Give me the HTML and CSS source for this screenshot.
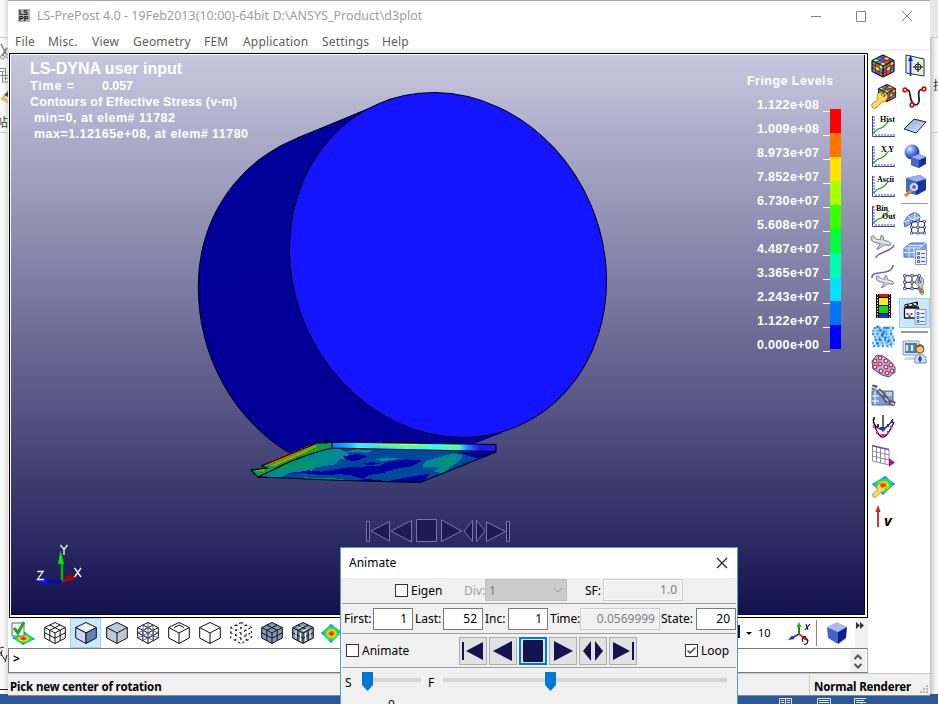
FILE: index.html
```html
<!DOCTYPE html>
<html lang="en">
<head>
<meta charset="utf-8">
<title>LS-PrePost 4.0</title>
<link rel="stylesheet" href="styles.css">
</head>
<body>
<svg class="defs" width="0" height="0">
  <defs>
    <linearGradient id="sky" x1="0" y1="0" x2="0" y2="1"><stop offset="0" stop-color="#c7c7de"/><stop offset="1" stop-color="#131250"/></linearGradient>
    <linearGradient id="side" x1="0" y1="0" x2=".35" y2="1"><stop offset="0" stop-color="#0000b4"/><stop offset=".25" stop-color="#00009b"/><stop offset="1" stop-color="#000096"/></linearGradient>
    <linearGradient id="band" x1="0" y1="0" x2="1" y2="0"><stop offset="0" stop-color="#0878f0"/><stop offset=".1" stop-color="#20b0ff"/><stop offset=".16" stop-color="#30f0ff"/><stop offset=".3" stop-color="#50d0ff"/><stop offset=".45" stop-color="#40ffd8"/><stop offset=".6" stop-color="#38f8f8"/><stop offset=".78" stop-color="#30ffc8"/><stop offset=".82" stop-color="#3090ff"/><stop offset=".9" stop-color="#1a1aff"/></linearGradient>
    <linearGradient id="pale" x1="0" y1="0" x2="1" y2="1"><stop offset="0" stop-color="#7e9be6"/><stop offset="1" stop-color="#e8f0ff"/></linearGradient>
    <radialGradient id="ball" cx=".35" cy=".3" r=".7"><stop offset="0" stop-color="#dfe8ff"/><stop offset=".5" stop-color="#5b80e0"/><stop offset="1" stop-color="#122a98"/></radialGradient>
    <radialGradient id="heat"><stop offset="0" stop-color="#e01000"/><stop offset=".2" stop-color="#ff5000"/><stop offset=".35" stop-color="#ffe000"/><stop offset=".55" stop-color="#38e030"/><stop offset=".75" stop-color="#00c8e0"/><stop offset="1" stop-color="#1040f0"/></radialGradient>
    <g id="faces3">
      <path d="M0-10.500 10.300-5.500 10.300 5 0 10.500-10.300 5-10.300-5.500z"/>
      <path d="M-10.300-5.500 0 0 10.300-5.500M0 0V10.500" fill="none"/>
    </g>
    <path id="grid2" fill="none" d="M-5.200-8 5.200-2.700V7.700M5.200-8-5.200-2.700V7.700M-10.300-.2 0 5.200 10.300-.2"/>
    <g id="rubik" stroke="#101018" stroke-width=".45">
      <path fill="#b428c4" d="M0-11 3.700-9.300 0-7.500-3.700-9.300zM7.400-7.500 11-5.500 7.400-3.700 3.700-5.600z"/>
      <path fill="#20a8f0" d="M-3.700-9.300 0-7.500-3.700-5.600-7.400-7.500z"/><path fill="#f8f020" d="M3.700-9.300 7.400-7.500 3.700-5.600 0-7.500z"/>
      <path fill="#f8f020" d="M-7.400-7.500-3.700-5.600-7.400-3.700-11-5.500z"/><path fill="#b428c4" d="M0-7.500 3.700-5.600 0-3.700-3.700-5.600z"/>
      <path fill="#20a8f0" d="M-3.700-5.600 0-3.700-3.700-1.800-7.400-3.700z"/><path fill="#f05018" d="M3.700-5.600 7.400-3.700 3.700-1.800 0-3.700z"/><path fill="#f8f020" d="M0-3.700 3.700-1.800 0 0-3.700-1.800z"/>
      <path fill="#20a8f0" d="M-11-5.500-7.400-3.700V0L-11-1.800zM-3.700 2V5.700L0 7.500V3.800zM3.700-1.800V1.900L0 3.800V0zM11 2V5.500L7.400 7.400V3.700z"/>
      <path fill="#f05018" d="M-7.400-3.700-3.700-1.800V2L-7.400 0zM-11-1.800-7.400 0V3.700L-11 2zM7.400-3.700V0L3.700 1.900V-1.800zM3.700 5.600V9.300L0 11V7.500z"/>
      <path fill="#f8f020" d="M-3.700-1.800 0 0V3.800L-3.700 2zM-7.400 0-3.700 2V5.700L-7.400 3.700zM11-5.500V-1.800L7.400 0V-3.700zM7.400 0V3.700L3.700 5.600V1.900z"/>
      <path fill="#b428c4" d="M-7.400 3.700-3.700 5.700V9.300L-7.400 7.400zM11-1.800V2L7.400 3.700V0zM3.700 1.900V5.600L0 7.500V3.800z"/>
      <path fill="#20a8f0" d="M-11 2-7.400 3.700V7.400L-11 5.500z"/><path fill="#f05018" d="M-3.700 5.700 0 7.500V11L-3.700 9.300zM7.400 3.700V7.400L3.700 9.300V5.600z"/>
      <path fill="none" stroke-width="1" d="M0-11 11-5.500V5.500L0 11-11 5.500V-5.500zM-11-5.500 0 0 11-5.500M0 0V11"/>
    </g>
    <g id="wrench"><path d="M-11 8-5 3C-7 0-5-4-1-4L-2-1 1 1 4-2C6 2 3 6-1 6L-7 12C-10 13-12 11-11 8z" fill="#ffd860" stroke="#a87010" stroke-width=".8"/></g>
    <g id="plot"><path d="M-10.500-10V10.500H12" fill="none" stroke="#3a46a8" stroke-width="1"/><path d="M-10-9h2m-2 3h2m-2 3h2m-2 3h2m-2 3h2m-2 3h2M-7 8v2m3-2v2m3-2v2m3-2v2m3-2v2m3-2v2m3-2v2" fill="none" stroke="#3a46a8"/><path d="M-9.500 8C-6 1-4 4 0 1S3-3 6-5" fill="none" stroke="#30a030" stroke-width="1.300"/></g>
    <g id="nodes"><path d="M-9-9H9M-9-1H9M-9 7H9M-9-9V7M0-9V7M9-9V7" fill="none" stroke="#222" stroke-width="1.300"/><path fill="#fff" stroke="#2c3c98" d="M-10.500-10.500h3v3h-3zM-1.500-10.500h3v3h-3zM7.500-10.500h3v3h-3zM-10.500-2.500h3v3h-3zM-1.500-2.500h3v3h-3zM7.500-2.500h3v3h-3zM-10.500 5.500h3v3h-3zM-1.500 5.500h3v3h-3zM7.500 5.500h3v3h-3z"/></g>
    <g id="list"><path fill="#edf2ff" stroke="#7f96d8" d="M.5-3.500H11.500V11.500H.5z"/><path fill="none" stroke="#3c5cc8" d="M2.500-.5h2v2h-2zM2.500 3.500h2v2h-2zM2.500 7.500h2v2h-2zM6 .5h4M6 4.500h4M6 8.500h4"/></g>
    <g id="plane"><path fill="#c4ccd4" stroke="#5f6c78" stroke-width=".9" d="M-12-8-9-10-6-6-1-5 0-10 2-10 4-4 9-3 12 0 10 2 4 1-3 6-5 6-1 0-8-2-11-4z"/><path d="M-9-5 9-1" stroke="#fff" stroke-width="1.200"/></g>
  </defs>
</svg>

<div class="desktop">
  <div class="behind left">
    <svg width="8" height="704" viewBox="0 0 8 704">
      <path d="M0 37.500H8M0 132.500H8" stroke="#c8c8c8"/>
      <path d="M1 44 6 54M7 48 2 56" stroke="#777" stroke-width="1.500"/><circle cx="2.500" cy="57" r="2" fill="none" stroke="#888"/><circle cx="8" cy="56" r="2" fill="none" stroke="#888"/>
      <path d="M0 68.500H5.500V80M0 71.500H4M0 75.500H4M2.500 71V82H8M4 75.500H8M4 78.500H8" fill="none" stroke="#888"/>
      <path d="M0 99 4 95 8 100V104z" fill="#e6bd78"/><path d="M4 95 8 91V97z" fill="#505050"/>
      <text x="-4" y="127" class="cjk">帖</text>
      <path d="M0 648 4 647M0 652 5 660M2 650 1 656M7 655 5 662" stroke="#222" fill="none"/>
      <path d="M0 689.500H8" stroke="#222"/><path d="M0 694H8V704H0z" fill="#2b579a"/>
    </svg>
  </div>

  <main class="window">
    <header class="titlebar">
      <svg class="logo" width="12" height="13" viewBox="0 0 12 13"><rect width="12" height="13" fill="#b0b0b0"/><text x="1" y="6.300" class="logotext">LS</text><text x="1" y="12.400" class="logotext">PP</text></svg>
      <span class="title">LS-PrePost 4.0 - 19Feb2013(10:00)-64bit D:\ANSYS_Product\d3plot</span>
      <svg class="caption" width="104" height="14" viewBox="0 0 104 14" fill="none" stroke="#858585"><path d="M1 7.500H11M46.500 2.500H55.500V12.500H46.500zM92 2 102 12M102 2 92 12"/></svg>
    </header>
    <nav class="menu"><span class="m1">File</span><span class="m2">Misc.</span><span class="m3">View</span><span class="m4">Geometry</span><span class="m5">FEM</span><span class="m6">Application</span><span class="m7">Settings</span><span>Help</span></nav>

    <div class="work">
      <div class="center">
        <div class="frame">
          <svg class="scene" width="853" height="559" viewBox="11 55 853 559">
            <rect x="11" y="55" width="853" height="559" fill="url(#sky)"/>
            <path d="M297 138C240 160 198 215 198.300 288C198.300 355 233 420 291 454L330 470 400 475 476 443 502 433 440 200 378 104z" fill="url(#side)"/>
            <path d="M305 135C240 160 198 215 198.300 288C198.300 355 233 420 291 454M297 138 376 106" fill="none" stroke="#000008" stroke-width="1"/>
            <ellipse cx="448" cy="265" rx="175.600" ry="155" transform="rotate(66.400 448 265)" fill="#1414ff" stroke="#000010"/>
            <g transform="translate(240 420) scale(.33333)" shape-rendering="crispEdges">
              <path fill="#00489c" d="M52 170 100 142 200 106 275 84 767 93 740 108 545 187 310 181z"/>
              <path fill="#008a96" d="M55 168 100 143 180 114 270 85 295 85 322 98 328 113 300 118 285 133 230 142 215 152 150 158 120 172zM545 140 560 122 640 100 670 106 655 125 610 158 580 157 600 140zM405 118 440 112 478 116 430 124zM350 88 400 92 380 98 320 95z"/>
              <path fill="#009766" d="M100 151 160 128 240 122 240 134 180 146 130 152zM190 172 300 176 315 181 200 177zM580 133 620 119 650 124 630 135z"/>
              <path fill="#0000a0" d="M140 161 205 151 245 155 330 141 420 138 440 125 500 118 548 122 515 139 460 148 430 159 385 165 370 178 330 165 300 163 240 165 195 160zM308 109 350 102 385 108 345 124 320 120zM310 180 390 178 450 184 545 187 440 185zM440 184 500 172 575 160 545 187zM650 96 762 97 738 112 705 113zM365 131 400 126 420 131 390 136z"/>
              <path fill="#089858" d="M65 136 230 68 275 70 274 84 180 112 100 150 55 170 36 150 80 150z"/>
              <path fill="#b07008" d="M70 135 100 120 210 75 225 77 130 120 90 135z"/>
              <path fill="#78b010" d="M90 137 180 98 225 76 235 78 190 101 110 137zM38 150 75 147 68 155z"/>
              <path fill="#18a020" d="M110 135 250 75 256 82 130 138z"/>
              <path fill="url(#band)" d="M275 65 767 73V95L275 84z"/>
              <path fill="#70ff60" d="M390 73 470 69 570 72 560 77 420 77zM600 76H660V80H610z"/><path fill="#e0ff40" d="M480 71H535V76H480z"/>
            </g>
            <path d="M261 466 317 443 327 443 325 440 332 442 496 444.500V451.500L332 448V442M332 448C310 453 285 463 275 469L258 477 251 470 268 468 261 466M258 477 344 480.500 420 482.500 496 452" fill="none" stroke="#000" stroke-width="1.100"/>
            <g class="hud">
              <text x="30" y="74" class="head" textLength="152">LS-DYNA user input</text>
              <text x="30" y="90" textLength="44">Time =</text><text x="102" y="90" textLength="31">0.057</text>
              <text x="30" y="106" textLength="207">Contours of Effective Stress (v-m)</text>
              <text x="34" y="122" textLength="141">min=0, at elem# 11782</text>
              <text x="34" y="138" textLength="214">max=1.12165e+08, at elem# 11780</text>
              <text x="747" y="85" textLength="86">Fringe Levels</text>
              <text x="757" y="109" textLength="62">1.122e+08</text><text x="757" y="133" textLength="62">1.009e+08</text><text x="757" y="157" textLength="62">8.973e+07</text><text x="757" y="181" textLength="62">7.852e+07</text><text x="757" y="205" textLength="62">6.730e+07</text><text x="757" y="229" textLength="62">5.608e+07</text><text x="757" y="253" textLength="62">4.487e+07</text><text x="757" y="277" textLength="62">3.365e+07</text><text x="757" y="301" textLength="62">2.243e+07</text><text x="757" y="325" textLength="62">1.122e+07</text><text x="757" y="349" textLength="62">0.000e+00</text>
            </g>
            <path d="M823 111.500h7m-7 24h7m-7 24h7m-7 24h7m-7 24h7m-7 24h7m-7 24h7m-7 24h7m-7 24h7m-7 24h7m-7 24h7" stroke="#fff"/>
            <g shape-rendering="crispEdges"><rect x="830" y="109" width="11" height="24" fill="#f00"/><rect x="830" y="133" width="11" height="24" fill="#ff7300"/><rect x="830" y="157" width="11" height="24" fill="#ffe200"/><rect x="830" y="181" width="11" height="24" fill="#a9ff00"/><rect x="830" y="205" width="11" height="24" fill="#39ff00"/><rect x="830" y="229" width="11" height="24" fill="#00ff36"/><rect x="830" y="253" width="11" height="24" fill="#00ffaa"/><rect x="830" y="277" width="11" height="24" fill="#00e2ff"/><rect x="830" y="301" width="11" height="24" fill="#0072ff"/><rect x="830" y="325" width="11" height="24" fill="#00f"/></g>
            <g fill="#1d1b56" stroke="#77779f"><path d="M366.500 521.500h3v20h-3zM371 531 389.500 521.500V541zM391 531 411.500 520.500V542zM416.500 519.500H436.500V541.500H416.500zM441.500 520 461.500 531 441.500 541.500zM464 531 472.500 520.500V541.500zM476.500 520.500V541.500L485 531zM486.500 522 505.500 531.500 486.500 541.500zM506.500 521.500h3v20h-3z"/></g>
            <path d="M62 581V564" stroke="#00b800" stroke-width="2.500"/><path d="M60.500 550 64 564H58z" fill="#00e800"/>
            <path d="M62 581.500H45" stroke="#0000e0" stroke-width="2.500"/><path d="M34 580.500 47 578V584z" fill="#1010ff"/>
            <path d="M62 582 70 578" stroke="#d00" stroke-width="2"/><ellipse cx="70" cy="578" rx="4.500" ry="3" fill="#a00000" transform="rotate(-20 70 578)"/>
            <path d="M60.500 545 64 549.500 67.500 545M64 549.500V555M37.500 571.500H43L37.500 579.500H44M74.500 568 81 577M81 568 74.500 577" fill="none" stroke="#fff" stroke-width="1.300"/>
          </svg>
        </div>

        <div class="renderbar">
          <span class="cell"><svg viewBox="-15 -15 30 30"><path d="M-12 5 1-1 11 6-1 12z" fill="url(#heat)"/><path d="M-12-10H0V3H-12z" fill="#f8f8f8" stroke="#666"/><path d="M-10-5-6 0 0-11" stroke="#18a828" stroke-width="3" fill="none"/></svg></span>
          <span class="cell"><svg viewBox="-15 -15 30 30" fill="#fff" stroke="#111"><use href="#faces3"/><use href="#grid2"/></svg></span>
          <span class="cell on"><svg viewBox="-15 -15 30 30" stroke="#111"><path d="M0-10.500 10.300-5.500 0 0-10.300-5.500z" fill="#eef3ff"/><path d="M0 0V10.500L-10.300 5V-5.500z" fill="#cdd8f8"/><path d="M0 0V10.500L10.300 5V-5.500z" fill="#6480b8"/></svg></span>
          <span class="cell"><svg viewBox="-15 -15 30 30" fill="#bdc8d8" stroke="#111"><use href="#faces3"/></svg></span>
          <span class="cell"><svg viewBox="-15 -15 30 30" fill="#fff" stroke="#111"><use href="#faces3"/><use href="#grid2"/><path d="M0-10V0L-10 5M0 0 10 5M-5-8V2L5 7.500M5-8V2L-5 7.500M-10 0 0-5 10 0" fill="none" stroke="#53658b"/></svg></span>
          <span class="cell"><svg viewBox="-15 -15 30 30" fill="#fff" stroke="#111"><use href="#faces3"/><path d="M-5-5.500 0-8 5-5.500" fill="none"/></svg></span>
          <span class="cell"><svg viewBox="-15 -15 30 30" fill="#fff" stroke="#111"><use href="#faces3"/></svg></span>
          <span class="cell"><svg viewBox="-15 -15 30 30" fill="none" stroke="#222" stroke-width="1.200" stroke-dasharray="2 3"><use href="#faces3"/><use href="#grid2"/></svg></span>
          <span class="cell"><svg viewBox="-15 -15 30 30" fill="#8498bc" stroke="#111"><use href="#faces3"/><use href="#grid2"/></svg></span>
          <span class="cell"><svg viewBox="-15 -15 30 30" fill="#8498bc" stroke="#111"><use href="#faces3"/><use href="#grid2"/><path d="M-7-2.500V5M-2.500 0V8M2.500 0V8M7-2.500V5M-5-4.500 0-7M0-2 5-4.500" stroke="#fff" fill="none"/></svg></span>
          <span class="cell"><svg viewBox="-15 -15 30 30"><path d="M-13 0-3-9 8-1-3 10z" fill="url(#heat)"/></svg></span>
          <span class="barend">
            <i class="bar"></i><svg width="7" height="5" viewBox="0 0 7 5"><path d="M0 1H6L3 4z"/></svg><b class="ten">10</b>
            <svg class="axis" width="24" height="24" viewBox="0 0 24 24"><path d="M12 13V4" stroke="#169416" stroke-width="2"/><path d="M12 1 14.500 6H9.500z" fill="#20b020"/><path d="M12 13 5 17" stroke="#2030c0" stroke-width="1.700"/><path d="M1 19 5 14.500 7.500 18z" fill="#2030d0"/><path d="M12 13 20 19" stroke="#d02020" stroke-width="1.700"/><path d="M22 20 15.500 18 18 14.500z" fill="#d02020"/><path d="M18 9 23 3M19 3 21 9M16 21C14 17 17 15 19 16M20 18C22 22 19 24 17 23" stroke="#111" fill="none" stroke-width="1.100"/></svg>
            <i class="vsep"></i>
            <svg class="solid" width="20" height="22" viewBox="0 0 20 22"><path d="M10 0 20 5 11 10 0 5z" fill="#a8b8f0"/><path d="M0 5 11 10V22L1 16z" fill="#4660cc"/><path d="M11 10 20 5 19 16 11 22z" fill="#101c90"/></svg>
            <span class="more"><svg width="8" height="7" viewBox="0 0 8 7"><path d="M0 0 4 3.500 0 7zM4 0 8 3.500 4 7z" fill="#333"/></svg></span>
          </span>
        </div>
        <div class="command"><span>&gt;</span><svg class="spin" width="16" height="22" viewBox="0 0 16 22"><path fill="none" stroke="#555" stroke-width="2" d="M4.500 9 8 5.500 11.500 9M4.500 14 8 17.500 11.500 14"/></svg></div>
      </div>

      <aside class="tools">
        <div class="col">
          <svg viewBox="-15 -15 30 30"><use href="#rubik"/></svg>
          <svg viewBox="-15 -15 30 30"><use href="#rubik" transform="translate(4 -3) scale(.78)"/><use href="#wrench"/></svg>
          <svg viewBox="-15 -15 30 30"><use href="#plot"/><text x="-3" y="-4" class="ic" textLength="15">Hist</text></svg>
          <svg viewBox="-15 -15 30 30"><use href="#plot"/><text x="-2" y="-4" class="ic" textLength="13">X Y</text></svg>
          <svg viewBox="-15 -15 30 30"><use href="#plot"/><text x="-6" y="-4" class="ic" textLength="17">Ascii</text></svg>
          <svg viewBox="-15 -15 30 30"><use href="#plot"/><text x="-7" y="-5" class="ic">Bin</text><text x="-1" y="3" class="ic">Out</text></svg>
          <svg viewBox="-15 -15 30 30"><use href="#plane" transform="translate(-2 -2) scale(.85)"/><path d="M-7 12C-7 6 9 6 11-1" fill="none" stroke="#8060c0" stroke-width="1.700"/></svg>
          <svg viewBox="-15 -15 30 30"><path d="M-11 2C-12-7 9 1 10-11" fill="none" stroke="#8060c0" stroke-width="1.700"/><use href="#plane" transform="translate(2 7) scale(.75)"/></svg>
          <svg viewBox="-15 -15 30 30"><path d="M-7-12H8V12H-7z"/><path d="M-4-12H5V-9H-4z" fill="#e01010"/><path d="M-4-8H5V-1H-4z" fill="#ffe830"/><path d="M-4 0H5V7H-4z" fill="#10d810"/><path d="M-4 8H5V12H-4z" fill="#1038d0"/><path d="M-5.500-12V12M6.500-12V12" stroke="#fff" stroke-dasharray="1.300 1.500" stroke-width="1.200"/></svg>
          <svg viewBox="-15 -15 30 30"><path d="M-10-8 9-10 12 9-8 11z" fill="#b4dcff"/><g fill="none" stroke-width="2.400" stroke-dasharray="2 2.500"><path stroke="#2898f0" d="M-9-8H11M-11-2H9M-8 4H12M-10 10H9"/><path stroke="#58b4ff" d="M-11-5H11M-9 1H11M-11 7H10"/><path stroke="#1868d8" d="M-6-10 8 9M4-9-7 10"/></g></svg>
          <svg viewBox="-15 -15 30 30"><path d="M-11-5-6-11 0-10 7-5 12 1 12 6 6 11-1 9-10 3z" fill="#a0bcf0" stroke="#3450b8"/><g fill="#fff" stroke="#e02838" stroke-width="1.300"><circle cx="-8" cy="-5" r="1.800"/><circle cx="-3" cy="-8" r="1.800"/><circle cx="-8" cy="1" r="1.800"/><circle cx="-3" cy="-2" r="1.900"/><circle cx="3" cy="-5" r="1.900"/><circle cx="-2" cy="5" r="1.900"/><circle cx="3" cy="1" r="1.900"/><circle cx="8" cy="-1" r="1.800"/><circle cx="9" cy="5" r="1.800"/><circle cx="4" cy="7" r="1.800"/></g></svg>
          <svg viewBox="-15 -15 30 30"><path d="M-11-5H10V9H-11z" fill="#7c9cd8" stroke="#4c6898"/><path d="M-11 0H-4M-11 5H-4M-8-5V9M3-3H9M3-1H9" stroke="#fff"/><path d="M-11-9-6-8M-5-6 1 0M1 0 5 6M6 6 12 8" stroke="#545c64" stroke-width="5"/><path d="M-11-9-6-7M-4-5 0-1M2 2 5 5M8 7 11 8" stroke="#d0d6dc" stroke-width="1.700"/></svg>
          <svg viewBox="-15 -15 30 30"><path d="M-10-7C-7 6-3 11 0 11S7 5 11-4M-10-4C-5 4-2 4 0 3S7-1 10-7M0-11V3" fill="none" stroke="#111" stroke-width="1.300"/><path d="M-4 1H4L0 6z" fill="#1830e0"/><path d="M-3 8H3L0 12z" fill="#f018c0"/><path d="M-9-9v3M-5-2v3M5-2v3M9-6v3" stroke="#1830e0" stroke-width="2"/><path d="M-9-1v3M-6 5v3M5 5v3M8 0v3" stroke="#f018c0" stroke-width="2"/></svg>
          <svg viewBox="-15 -15 30 30"><path d="M-10.500-10 6-6V9L-10.500 5zM-10.500-5 6-1M-10.500 0 6 4M-6.500-9V6M-2.500-8V7M2-7V8" fill="#fff" stroke="#808088" stroke-width=".9"/><path d="M-11-10.500 6-6.500" stroke="#7850b8" stroke-width="1.700"/><path d="M6 2 12 6.500 6 11z" fill="#a81890"/></svg>
          <svg viewBox="-15 -15 30 30"><path d="M-11-2 2-10 12-2 0 9z" fill="url(#heat)"/><use href="#wrench" transform="translate(-1 1) scale(.85)"/></svg>
          <svg viewBox="-15 -15 30 30"><path d="M-5 11V-6" stroke="#b84040" stroke-width="2"/><path d="M-5-11-7.500-4H-2.500z" fill="#d02020"/><text x="1" y="10" class="vee">v</text></svg>
        </div>
        <div class="col second">
          <svg viewBox="-15 -15 30 30"><path d="M-9-11 9-7V10L-9 7z" fill="#e4eee4" stroke="#26332c"/><path d="M-4.500 10V-7" stroke="#1828c8" stroke-width="1.700"/><path d="M-4.500-11-7-5H-2z" fill="#1828c8"/><circle cx="3" cy="1" r="3" fill="none" stroke="#111"/><path d="M-2 1H8M3-4V6" stroke="#111"/></svg>
          <svg viewBox="-15 -15 30 30"><path d="M-9-5C-4-9-6 1-3 6S5 9 4 2 4-8 10-6" fill="none" stroke="#222" stroke-width="1.800"/><g fill="#fff" stroke="#d01010" stroke-width="1.700"><circle cx="-10" cy="-6" r="1.800"/><circle cx="-3" cy="9" r="1.800"/><circle cx="9" cy="-7" r="1.800"/></g></svg>
          <svg viewBox="-15 -15 30 30"><path d="M-11 3-1-7 11-4 1 7z" fill="url(#pale)" stroke="#222"/></svg>
          <svg viewBox="-15 -15 30 30"><circle cx="-3" cy="-4" r="7.500" fill="url(#ball)"/><path d="M-4 1 4-2 11 1 11 8 4 12-4 9z" fill="#1830a0"/><path d="M-4 1 4-2 11 1 4 4z" fill="#98b0f0"/><path d="M-4 1 4 4V12L-4 9z" fill="#4868c8"/></svg>
          <svg viewBox="-15 -15 30 30"><path d="M-9-8 5-11 11-7V4L2 9-9 6z" fill="#1830a0"/><path d="M-9-8 5-11 11-7 1-4z" fill="#98b0f0"/><path d="M-9-8 1-4V9L-9 6z" fill="#4868c8"/><circle cx="-1" cy="1" r="3" fill="none" stroke="#d8dce0" stroke-width="2.200"/><path d="M-3 4-10 10" stroke="#c89048" stroke-width="3.500"/></svg>
          <i class="rule"></i>
          <svg viewBox="-15 -15 30 30"><path d="M-11-1-7-7 0-11 5-7 4-2-3 0-10 4z" fill="#90ace8" stroke="#4460b0"/><path d="M-7-7-2-3M0-11-1 0M-11-1 5-6" stroke="#e4ecff" fill="none"/><use href="#nodes" transform="translate(3 5) scale(.72)"/></svg>
          <svg viewBox="-15 -15 30 30"><path d="M-11-5-4-10H11V-1L4 4H-11z" fill="#7fa6e6" stroke="#4a70b8"/><path d="M-11-5H4V4M4-5 11-10M-6-5V4M-1-5V4M-11-.5H4M-7-7.500H8" stroke="#dceaff" fill="none"/><use href="#list"/></svg>
          <svg viewBox="-15 -15 30 30"><use href="#nodes" transform="translate(-3 0) scale(.8)"/><path d="M1-3 3-6V0H6V-6C10-4 9 1 7 3L9 10C8 12 6 12 5 10L4 3C1 2 0 0 1-3z" fill="#ccd2d8" stroke="#666" stroke-width=".8"/><path d="M5 5 7 10" stroke="#b07838" stroke-width="3"/></svg>
          <svg class="picked" viewBox="-15 -15 30 30"><path d="M-10-5H4V5H-10z" fill="#fff" stroke="#111" stroke-width="1.300"/><path d="M-10-8 3-11V-8L-9-6z" fill="#fff" stroke="#111"/><path d="M-9-6H4M-8-9-6-7M-3-10-1-8M1-11 3-9" stroke="#111" stroke-width="1.500"/><path d="M-8 0h2v2h-2zM-4 0h2v2h-2z" fill="#e02020"/><path d="M-6 2h2v2h-2z" fill="#2040d0"/><use href="#list"/></svg>
          <i class="rule low"></i>
          <svg viewBox="-15 -15 30 30"><path d="M-12-10H4V4H-12z" fill="#dce8f4" stroke="#8898a8"/><path d="M-10-8H2V2H-10z" fill="#3880c8"/><path d="M-8-6v6M-3-6v6" stroke="#ffe0a0" stroke-width="2.500"/><path d="M-9 6H0V9H-11z" fill="#d0d8e0"/><path d="M0 12C-1 5 2 3 5 3S12 5 11 12z" fill="#d0e0f8" stroke="#7088b8"/><circle cx="5" cy="-2" r="4" fill="#ffc070" stroke="#905020"/><path d="M1-3C2-8 9-8 9-2L6-5z" fill="#885020"/><path d="M5 4 7 8 5 12 3 8z" fill="#2050b0"/></svg>
        </div>
      </aside>
    </div>
    <footer class="status"><span class="msg">Pick new center of rotation</span><span class="mode">Normal Renderer</span><svg class="grip" width="9" height="9" viewBox="0 0 9 9"><path d="M6 0h2v2H6zM3 3h2v2H3zM6 3h2v2H6zM0 6h2v2H0zM3 6h2v2H3zM6 6h2v2H6z" fill="#b8b8b8"/></svg></footer>
    <div class="taskbar"><svg width="88" height="7" viewBox="0 0 88 7" fill="none" stroke="#dfe8f5"><path d="M.5 7V.5H12.500V7M6.500 1V7M2 2.500H5M2 4.500H5M8 2.500H11M8 4.500H11M38.500 7V.5H51.500V7M40 2.500H50M40 4.500H50M75.500 7V.5H87M77 2.500H85M77 4.500H82M82.500 6.500V4.500H87"/></svg></div>
  </main>

  <div class="behind right"><svg width="8" height="704" viewBox="0 0 8 704"><path d="M0 0H8V37H0z" fill="#e6e6e6"/><path d="M0 37.500H8M0 132.500H8" stroke="#c8c8c8"/><text x="3" y="90" class="cjk">技</text><path d="M0 694H8V704H0z" fill="#2b579a"/></svg></div>
</div>

<section class="dialog">
  <header><span>Animate</span><svg width="12" height="12" viewBox="0 0 12 12"><path d="M1 1 11 11M11 1 1 11" stroke="#222" stroke-width="1.200"/></svg></header>
  <div class="row r1"><i class="check"></i><span class="l eigen">Eigen</span><span class="l div">Div:</span><span class="select">1<svg width="10" height="6" viewBox="0 0 10 6"><path d="M1 1 5 5 9 1" fill="none" stroke="#999"/></svg></span><span class="l sf">SF:</span><span class="field off sfv">1.0</span></div>
  <div class="row r2"><span class="l first">First:</span><span class="field">1</span><span class="l last">Last:</span><span class="field">52</span><span class="l inc">Inc:</span><span class="field">1</span><span class="l time">Time:</span><span class="field off tv">0.0569999</span><span class="l state">State:</span><span class="field">20</span></div>
  <div class="row r3"><i class="check"></i><span class="l anim">Animate</span>
    <span class="btns">
      <button><svg viewBox="0 0 24 24"><path d="M1 3H3V21H1zM5 12 22 3V21z"/></svg></button>
      <button><svg viewBox="0 0 24 24"><path d="M2 12 21 2V22z"/></svg></button>
      <button class="focus"><svg viewBox="0 0 24 24"><rect x="2" y="1" width="20" height="22" rx="1"/></svg></button>
      <button><svg viewBox="0 0 24 24"><path d="M22 12 3 2V22z"/></svg></button>
      <button><svg viewBox="0 0 24 24"><path d="M2 12 10 2V22zM22 12 14 2V22z"/></svg></button>
      <button><svg viewBox="0 0 24 24"><path d="M21 3H23V21H21zM19 12 2 3V21z"/></svg></button>
    </span>
    <i class="check loopbox"><svg width="11" height="11" viewBox="0 0 11 11"><path d="M1.500 5.500 4 8 9.500 2.500" fill="none" stroke="#333" stroke-width="1.300"/></svg></i><span class="l">Loop</span></div>
  <div class="row r4"><span class="l s">S</span><span class="slider s1"><svg width="11" height="19" viewBox="0 0 11 19"><path d="M0 0H11V13L5.500 19 0 13z" fill="#0078d7"/></svg></span><span class="l f">F</span><span class="slider s2"><svg width="11" height="19" viewBox="0 0 11 19"><path d="M0 0H11V13L5.500 19 0 13z" fill="#0078d7"/></svg></span></div>
  <div class="zero">0</div>
</section>
</body>
</html>
```
FILE: styles.css
```css
* { box-sizing: border-box; }
html, body { margin: 0; height: 704px; overflow: hidden; }
body { font-family: "Noto Sans", "Noto Sans CJK SC", sans-serif; font-size: 12px; color: #000; background: #fff; position: relative; }
svg { display: block; flex: none; }
.defs { position: absolute; }
.desktop { display: flex; width: 938px; height: 704px; }
.behind { width: 8px; flex: none; background: #f3f3f3; }
.behind.right { background: linear-gradient(to right, #c4c4c4, #f0f0f0 5px, #f8f8f8); }
.behind.left { background: linear-gradient(to right, #fafafa 3px, #dcdcdc); }
.cjk { font: 12px "Noto Sans CJK SC", sans-serif; fill: #333; }

.window { width: 922px; height: 704px; display: flex; flex-direction: column; background: #fff; border-top: 1px solid #a5a5a5; }
.window > * { flex: none; }
.titlebar { height: 30px; display: flex; align-items: center; padding: 0 16px 1px 10px; }
.logotext { font: bold 7px "Liberation Sans", sans-serif; fill: #111; }
.title { margin-left: 7px; font-size: 12.5px; letter-spacing: .02px; color: #9d9d9d; white-space: pre; }
.caption { margin-left: auto; }
.menu { height: 18px; display: flex; align-items: center; padding: 2px 0 0 7px; font-size: 12px; color: #5c5c5c; letter-spacing: .2px; }
.menu span { flex: none; }
.m1 { width: 33px; } .m2 { width: 44px; } .m3 { width: 41px; } .m4 { width: 71px; } .m5 { width: 39px; } .m6 { width: 79px; } .m7 { width: 60px; }

.work { height: 624px; display: flex; }
.center { width: 860px; flex: none; background: #f0f0f0; padding-top: 4px; }
.frame { margin-left: 1px; width: 859px; height: 565px; border: 1px solid #000; background: #fff; padding: 1px; }
.scene { box-sizing: content-box; border-right: 1px solid #000; border-bottom: 1px solid #000; }
.hud { font: bold 12.5px "Liberation Sans", sans-serif; fill: #fff; }
.hud .head { font-size: 16px; }
.renderbar { height: 30px; display: flex; background: #fff; }
.cell { width: 31px; height: 30px; padding: 0 .5px; flex: none; display: flex; align-items: center; border: 1px solid transparent; }
.cell svg { width: 30px; height: 30px; margin-left: -1px; }
.cell.on { background: #cce8ff; border-color: #99d1ff; }
.barend { margin-left: auto; width: 130px; display: flex; align-items: center; }
.bar { width: 2px; height: 13px; background: #111; margin: 0 6px 3px 0; }
.ten { font-weight: normal; font-size: 11px; margin: -2px 0 0 5px; width: 29px; }
.vsep { width: 1px; height: 26px; background: #888; margin: 0 10px 0 5px; }
.more { align-self: stretch; width: 13px; margin-left: auto; background: #f0f0f0; padding: 4px 0 0 1px; }
.command { height: 25px; border: 1px solid #7a7a7a; border-right-color: #aaa; background: #fff; display: flex; padding: 1px; justify-content: space-between; }
.command span { padding-left: 3px; font-size: 12px; line-height: 18px; font-weight: bold; }
.spin { background: #f0f0f0; }
.tools { width: 62px; display: flex; border-top: 2px solid #f0f0f0; }
.col { width: 31px; }
.col svg { width: 30px; height: 30px; }
.second svg { margin-left: 1px; }
.second svg.picked { width: 31px; margin-left: 0; background: #cce8ff; box-shadow: inset 0 0 0 1px #99d1ff; }
.rule { display: block; height: 1px; width: 27px; margin: 2px 0 4px 2px; background: #999; }
.rule.low { height: 2px; margin: 3px 0 3px 2px; }
.ic { font: bold 8px "Liberation Serif", serif; }
.vee { font: italic bold 15px "Noto Sans", sans-serif; }
.status { height: 23px; border-top: 1px solid #c8c8c8; background: #f0f0f0; display: flex; align-items: center; font-weight: bold; font-size: 11.5px; letter-spacing: -.15px; border-bottom: 1px solid #888; }
.msg { width: 801px; padding: 3px 0 0 2px; }
.mode { border-left: 1px solid #ccc; padding-left: 4px; height: 20px; line-height: 23px; }
.grip { margin: 9px 1px 0 auto; }
.taskbar { height: 8px; background: #2b579a; padding: 2px 0 0 771px; }

.dialog { position: absolute; left: 340px; top: 547px; width: 398px; height: 170px; background: #f0f0f0; border: 1px solid #5c9db8; font-size: 12px; }
.dialog header { height: 30px; background: #fff; display: flex; align-items: center; justify-content: space-between; padding: 0 9px 1px 8px; }
.row { display: flex; align-items: center; margin: 0 1px; border-bottom: 1px solid #a0a0a0; white-space: pre; }
.l { flex: none; }
.check { width: 13px; height: 13px; border: 1px solid #333; background: #fff; flex: none; }
.r1 { height: 26px; padding: 0 0 1px 53px; }
.eigen { margin-left: 3px; width: 53px; }
.div { width: 21px; color: #a0a0a0; }
.select { width: 82px; height: 22px; background: #ccc; border: 1px solid #bfbfbf; color: #777; display: flex; align-items: center; justify-content: space-between; padding: 0 3px; }
.sf { margin-left: 18px; width: 18px; }
.field { width: 40px; height: 22px; border: 1px solid #7a7a7a; background: #fff; text-align: right; padding-right: 5px; line-height: 20px; flex: none; }
.off { background: #f0f0f0; border-color: #ccc; color: #808080; box-shadow: inset 0 0 0 1px #fafafa; }
.sfv { width: 80px; }
.tv { width: 80px; padding-right: 4px; }
.r2 { height: 30px; padding-left: 2px; }
.first { width: 29px; } .last { width: 30px; padding-left: 2px; } .inc { width: 25px; padding-left: 2px; } .time { width: 32px; padding-left: 2px; letter-spacing: -.2px; } .state { width: 36px; padding-left: 1px; }
.r3 { height: 34px; padding-left: 4px; }
.anim { margin-left: 3px; width: 97px; }
.btns { display: flex; gap: 2px; }
.btns button { width: 28px; height: 28px; border: 1px solid #adadad; background: #e1e1e1; padding: 1px; }
.btns button.focus { border: 2px solid #0078d7; padding: 0; }
.btns svg { width: 24px; height: 24px; fill: #15134f; }
.loopbox { margin: 0 3px 0 48px; }
.r4 { height: 28px; border: 0; padding-left: 3px; }
.s { width: 17px; }
.slider { height: 28px; display: flex; align-items: center; background: linear-gradient(#d6d6d6, #d6d6d6) no-repeat 0 10px / 100% 4px; flex: none; }
.slider svg { margin-top: -1px; }
.s1 { width: 59px; } .s2 { width: 284px; padding-left: 102px; }
.f { width: 15px; margin-left: 7px; }
.zero { padding-left: 47px; line-height: 17px; }
```
